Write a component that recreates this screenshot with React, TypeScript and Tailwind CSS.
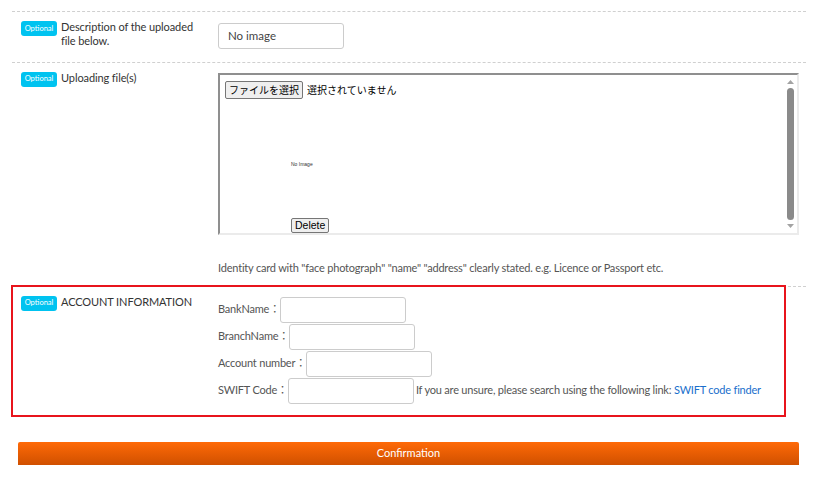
import React from 'react'

const font = { fontFamily: 'Lato, "Noto Sans", "Noto Sans CJK JP", sans-serif' }

function Badge() {
  return (
    <span className="inline-flex h-[15px] w-[36px] shrink-0 items-center justify-center rounded-[3px] bg-[#00c3f0] text-[7.5px] leading-none tracking-normal text-white">
      Optional
    </span>
  )
}

function RowLabel({ children }: { children: React.ReactNode }) {
  return (
    <div className="flex w-[206px] shrink-0 items-start gap-[4px] pl-[9px] pt-[9px]">
      <Badge />
      <div className="-mt-[1px] text-[11px] leading-[14px] tracking-[-0.1px] text-[#333]">{children}</div>
    </div>
  )
}

function TextInput({ value, className = '' }: { value?: string; className?: string }) {
  return (
    <input
      type="text"
      readOnly
      defaultValue={value}
      className={`h-[26px] w-[126px] shrink-0 rounded-[3px] border border-[#ccc] bg-white px-[9px] text-[11.5px] text-[#444] outline-none ${className}`}
      style={font}
    />
  )
}

function Scrollbar() {
  return (
    <div className="flex w-[13px] shrink-0 flex-col items-center bg-white py-[5px]">
      <svg width="7" height="4" viewBox="0 0 7 4"><path d="M0 4 L3.5 0 L7 4 Z" fill="#a3a3a3" /></svg>
      <div className="my-[4px] w-[7px] flex-1 rounded-full bg-[#8a8a8a]" />
      <svg width="7" height="4" viewBox="0 0 7 4"><path d="M0 0 L3.5 4 L7 0 Z" fill="#a3a3a3" /></svg>
    </div>
  )
}

function AccountField({ label, children }: { label: string; children?: React.ReactNode }) {
  return (
    <div className="flex items-center whitespace-nowrap text-[11px] tracking-[-0.2px] text-[#555]">
      <span>{label}：</span>
      <TextInput />
      {children}
    </div>
  )
}

export default function App() {
  return (
    <div className="min-h-[495px] bg-white pt-[11px]" style={font}>
      <div className="ml-[12px] mr-[9px]">
        {/* Description row */}
        <div className="flex border-t border-dashed border-[#d0d0d0]">
          <RowLabel>
            Description of the uploaded
            <br />
            file below.
          </RowLabel>
          <div className="pb-[13px] pt-[10px]">
            <TextInput value="No image" />
          </div>
        </div>

        {/* Upload row */}
        <div className="flex border-t border-dashed border-[#d0d0d0]">
          <RowLabel>Uploading file(s)</RowLabel>
          <div className="flex-1 pb-[11px] pr-[7px] pt-[10px]">
            <div className="flex h-[162px] border-2 border-b-[#ebebeb] border-l-[#8f8f8f] border-r-[#ebebeb] border-t-[#8f8f8f] bg-white">
              <div className="flex-1 overflow-hidden pl-[5px] pt-[6px]">
                <div className="flex items-center gap-[4px]" style={{ fontFamily: '"Noto Sans CJK JP", sans-serif' }}>
                  <button className="h-[18px] rounded-[2px] border border-[#767676] bg-[#efefef] px-[3px] text-[10px] leading-none text-black">
                    ファイルを選択
                  </button>
                  <span className="text-[10px] text-black">選択されていません</span>
                </div>
                <div
                  className="ml-[66px] mt-[63px] text-[5px] leading-none text-[#333]"
                  style={{ fontFamily: '"Liberation Sans", Arial, sans-serif' }}
                >
                  No Image
                </div>
                <button
                  className="ml-[66px] mt-[51px] h-[15px] rounded-[2px] border border-[#767676] bg-[#efefef] px-[3px] text-[10.5px] leading-none text-black"
                  style={{ fontFamily: '"Liberation Sans", Arial, sans-serif' }}
                >
                  Delete
                </button>
              </div>
              <Scrollbar />
            </div>
            <p className="mt-[26px] text-[11px] leading-[14px] tracking-[-0.2px] text-[#555]">
              Identity card with "face photograph" "name" "address" clearly stated. e.g. Licence or Passport etc.
            </p>
          </div>
        </div>

        {/* Account row */}
        <div className="relative flex border-t border-dashed border-[#d0d0d0] pb-[12px]">
          <RowLabel>
            <span className="whitespace-nowrap uppercase">Account Information</span>
          </RowLabel>
          <div className="flex flex-col gap-[1px] pt-[10px]">
            <AccountField label="BankName" />
            <AccountField label="BranchName" />
            <AccountField label="Account number" />
            <AccountField label="SWIFT Code">
              <span className="ml-[2px]">
                If you are unsure, please search using the following link:{' '}
                <a className="text-[#1a6fcc]">SWIFT code finder</a>
              </span>
            </AccountField>
          </div>
          {/* highlight frame */}
          <div className="pointer-events-none absolute -left-[1px] -top-[2px] h-[132px] w-[775px] border-2 border-[#e8141c]" />
        </div>
      </div>

      <div className="ml-[18px] mr-[16px] mt-[26px]">
        <button className="flex h-[23px] w-full items-center justify-center rounded-t-[2px] bg-gradient-to-b from-[#ff6a08] to-[#d05000] text-[11px] text-white">
          Confirmation
        </button>
      </div>
    </div>
  )
}
